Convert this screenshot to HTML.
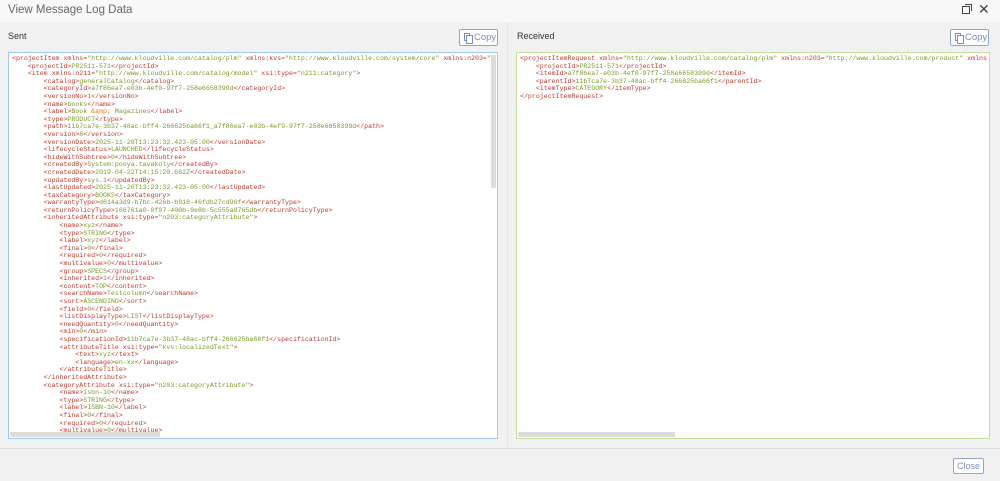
<!DOCTYPE html>
<html><head><meta charset="utf-8"><style>
*{box-sizing:border-box;margin:0;padding:0}
body{width:1000px;height:481px;background:#f1f1f1;font-family:"Liberation Sans",sans-serif;position:relative;overflow:hidden}
.title{position:absolute;left:0;top:0;width:1000px;height:22px;background:#f9f9f9;color:#666;font-size:11.5px;line-height:21px;padding-left:8px}
.lbl{position:absolute;top:31px;font-size:9px;color:#333}
.copy{position:absolute;top:29px;width:39px;height:17px;border:1px solid #8ea6cf;border-radius:2px;background:#fff;color:#7d8fb6;font-size:9.5px;line-height:15px;padding-left:14px}
.copy i{position:absolute;left:4px;top:3px;width:6px;height:8px;border:1px solid #7d8fb6}
.copy i:after{content:"";position:absolute;left:1px;top:1px;width:5px;height:7px;border:1px solid #7d8fb6;background:#fff}
.ed{position:absolute;top:52px;height:387px;background:#fff;overflow:hidden;font-family:"Liberation Mono",monospace;font-size:6.6px;line-height:7.6px;color:#c0392b;white-space:pre;padding:2px 0 0 3px}
.g{color:#7a9a28}
.o{color:#e67e22}
.l{display:block}
.sb{position:absolute;background:#ddd}
</style></head><body>
<div class="title">View Message Log Data</div>
<div style="position:absolute;left:962px;top:6px;width:8px;height:8px;border:1.3px solid #444"></div>
<div style="position:absolute;left:965px;top:4px;width:7px;height:7px;border-top:1.3px solid #444;border-right:1.3px solid #444"></div>
<div style="position:absolute;left:978px;top:1px;font-size:14px;color:#444">✕</div>
<div style="position:absolute;left:507px;top:22px;width:1px;height:426px;background:#e6e6e6"></div>
<div style="position:absolute;left:0;top:448px;width:1000px;height:1px;background:#e2e2e6"></div>
<div class="lbl" style="left:8px">Sent</div>
<div class="copy" style="left:459px"><i></i>Copy</div>
<div class="lbl" style="left:517px">Received</div>
<div class="copy" style="left:950px"><i></i>Copy</div>
<div class="ed" style="left:8px;width:490px;border:1px solid #9ec8ee"><span class="l">&lt;projectItem xmlns=<span class="g">"http://www.kloudville.com/catalog/plm"</span> xmlns:kvs=<span class="g">"http://www.kloudville.com/system/core"</span> xmlns:n203=<span class="g">"</span></span><span class="l">    &lt;projectId&gt;<span class="g">PR2511-571</span>&lt;/projectId&gt;</span><span class="l">    &lt;item xmlns:n211=<span class="g">"http://www.kloudville.com/catalog/model"</span> xsi:type=<span class="g">"n211:category"</span>&gt;</span><span class="l">        &lt;catalog&gt;<span class="g">generalCatalog</span>&lt;/catalog&gt;</span><span class="l">        &lt;categoryId&gt;<span class="g">a7f86ea7-e03b-4ef0-97f7-258e6658399d</span>&lt;/categoryId&gt;</span><span class="l">        &lt;versionNo&gt;<span class="g">1</span>&lt;/versionNo&gt;</span><span class="l">        &lt;name&gt;<span class="g">books</span>&lt;/name&gt;</span><span class="l">        &lt;label&gt;<span class="g">Book <span class="o">&amp;amp;</span> Magazines</span>&lt;/label&gt;</span><span class="l">        &lt;type&gt;<span class="g">PRODUCT</span>&lt;/type&gt;</span><span class="l">        &lt;path&gt;<span class="g">11b7ca7e-3b37-48ac-bff4-266625ba66f1_a7f86ea7-e03b-4ef0-97f7-258e6658399d</span>&lt;/path&gt;</span><span class="l">        &lt;version&gt;<span class="g">8</span>&lt;/version&gt;</span><span class="l">        &lt;versionDate&gt;<span class="g">2025-11-20T13:23:32.423-05:00</span>&lt;/versionDate&gt;</span><span class="l">        &lt;lifecycleStatus&gt;<span class="g">LAUNCHED</span>&lt;/lifecycleStatus&gt;</span><span class="l">        &lt;hideWithSubtree&gt;<span class="g">0</span>&lt;/hideWithSubtree&gt;</span><span class="l">        &lt;createdBy&gt;<span class="g">System:pooya.tavakoly</span>&lt;/createdBy&gt;</span><span class="l">        &lt;createdDate&gt;<span class="g">2019-04-22T14:15:20.662Z</span>&lt;/createdDate&gt;</span><span class="l">        &lt;updatedBy&gt;<span class="g">sys.1</span>&lt;/updatedBy&gt;</span><span class="l">        &lt;lastUpdated&gt;<span class="g">2025-11-20T13:23:32.423-05:00</span>&lt;/lastUpdated&gt;</span><span class="l">        &lt;taxCategory&gt;<span class="g">BOOKS</span>&lt;/taxCategory&gt;</span><span class="l">        &lt;warrantyType&gt;<span class="g">d614a3d9-b7bc-426b-b918-46fdb27cd96f</span>&lt;/warrantyType&gt;</span><span class="l">        &lt;returnPolicyType&gt;<span class="g">166761a0-0f07-400b-9e8b-5c555a8765db</span>&lt;/returnPolicyType&gt;</span><span class="l">        &lt;inheritedAttribute xsi:type=<span class="g">"n203:categoryAttribute"</span>&gt;</span><span class="l">            &lt;name&gt;<span class="g">xyz</span>&lt;/name&gt;</span><span class="l">            &lt;type&gt;<span class="g">STRING</span>&lt;/type&gt;</span><span class="l">            &lt;label&gt;<span class="g">xyz</span>&lt;/label&gt;</span><span class="l">            &lt;final&gt;<span class="g">0</span>&lt;/final&gt;</span><span class="l">            &lt;required&gt;<span class="g">0</span>&lt;/required&gt;</span><span class="l">            &lt;multivalue&gt;<span class="g">0</span>&lt;/multivalue&gt;</span><span class="l">            &lt;group&gt;<span class="g">SPECS</span>&lt;/group&gt;</span><span class="l">            &lt;inherited&gt;<span class="g">1</span>&lt;/inherited&gt;</span><span class="l">            &lt;content&gt;<span class="g">TOP</span>&lt;/content&gt;</span><span class="l">            &lt;searchName&gt;<span class="g">Testcolumn</span>&lt;/searchName&gt;</span><span class="l">            &lt;sort&gt;<span class="g">ASCENDING</span>&lt;/sort&gt;</span><span class="l">            &lt;field&gt;<span class="g">0</span>&lt;/field&gt;</span><span class="l">            &lt;listDisplayType&gt;<span class="g">LIST</span>&lt;/listDisplayType&gt;</span><span class="l">            &lt;needQuantity&gt;<span class="g">0</span>&lt;/needQuantity&gt;</span><span class="l">            &lt;min&gt;<span class="g">0</span>&lt;/min&gt;</span><span class="l">            &lt;specificationId&gt;<span class="g">11b7ca7e-3b37-48ac-bff4-266625ba66f1</span>&lt;/specificationId&gt;</span><span class="l">            &lt;attributeTitle xsi:type=<span class="g">"kvs:localizedText"</span>&gt;</span><span class="l">                &lt;text&gt;<span class="g">xyz</span>&lt;/text&gt;</span><span class="l">                &lt;language&gt;<span class="g">en-xx</span>&lt;/language&gt;</span><span class="l">            &lt;/attributeTitle&gt;</span><span class="l">        &lt;/inheritedAttribute&gt;</span><span class="l">        &lt;categoryAttribute xsi:type=<span class="g">"n203:categoryAttribute"</span>&gt;</span><span class="l">            &lt;name&gt;<span class="g">isbn-10</span>&lt;/name&gt;</span><span class="l">            &lt;type&gt;<span class="g">STRING</span>&lt;/type&gt;</span><span class="l">            &lt;label&gt;<span class="g">ISBN-10</span>&lt;/label&gt;</span><span class="l">            &lt;final&gt;<span class="g">0</span>&lt;/final&gt;</span><span class="l">            &lt;required&gt;<span class="g">0</span>&lt;/required&gt;</span><span class="l">            &lt;multivalue&gt;<span class="g">0</span>&lt;/multivalue&gt;</span>
<div class="sb" style="left:1px;bottom:1px;width:150px;height:5px"></div>
<div class="sb" style="right:1px;top:2px;width:5px;height:133px"></div>
</div>
<div class="ed" style="left:516px;width:474px;border:1px solid #c3e09c"><span class="l">&lt;projectItemRequest xmlns=<span class="g">"http://www.kloudville.com/catalog/plm"</span> xmlns:n203=<span class="g">"http://www.kloudville.com/product"</span> xmlns</span><span class="l">    &lt;projectId&gt;<span class="g">PR2511-571</span>&lt;/projectId&gt;</span><span class="l">    &lt;itemId&gt;<span class="g">a7f86ea7-e03b-4ef0-97f7-258e6658399d</span>&lt;/itemId&gt;</span><span class="l">    &lt;parentId&gt;<span class="g">11b7ca7e-3b37-48ac-bff4-266625ba66f1</span>&lt;/parentId&gt;</span><span class="l">    &lt;itemType&gt;<span class="g">CATEGORY</span>&lt;/itemType&gt;</span><span class="l">&lt;/projectItemRequest&gt;</span>
<div class="sb" style="left:1px;bottom:1px;width:157px;height:5px"></div>
</div>
<div style="position:absolute;left:953px;top:458px;width:31px;height:16px;border:1px solid #8ea6cf;border-radius:2px;background:#fff;color:#7d8fb6;font-size:9px;line-height:14px;text-align:center">Close</div>
</body></html>
